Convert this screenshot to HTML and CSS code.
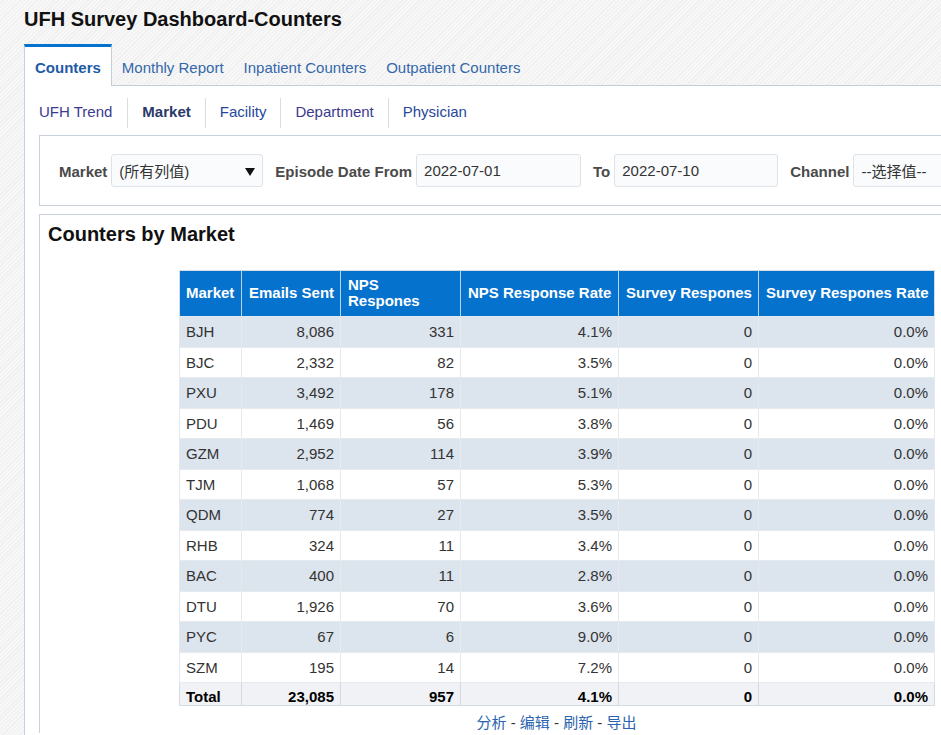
FILE: index.html
```html
<!DOCTYPE html>
<html lang="en">
<head>
<meta charset="utf-8">
<title>UFH Survey Dashboard-Counters</title>
<link rel="stylesheet" href="styles.css">
</head>
<body>
<div class="page">
  <h1 class="title">UFH Survey Dashboard-Counters</h1>
  <nav class="tabs">
    <a class="tab active">Counters</a>
    <a class="tab">Monthly Report</a>
    <a class="tab">Inpatient Counters</a>
    <a class="tab">Outpatient Counters</a>
  </nav>
  <div class="panel">
    <nav class="subtabs">
      <a class="subtab visited first">UFH Trend</a>
      <a class="subtab current">Market</a>
      <a class="subtab">Facility</a>
      <a class="subtab visited">Department</a>
      <a class="subtab">Physician</a>
    </nav>
    <div class="filters">
      <span class="flabel first">Market</span>
      <div class="field select"><span>(所有列值)</span><span class="caret"></span></div>
      <span class="flabel">Episode Date From</span>
      <div class="field date date-from">2022-07-01</div>
      <span class="flabel">To</span>
      <div class="field date date-to">2022-07-10</div>
      <span class="flabel">Channel</span>
      <div class="field select"><span>--选择值--</span><span class="caret"></span></div>
    </div>
    <section class="section">
      <h2 class="section-title">Counters by Market</h2>
      <div class="report">
        <table class="grid">
          <colgroup>
            <col class="c1"><col class="c2"><col class="c3"><col class="c4"><col class="c5"><col class="c6">
          </colgroup>
          <thead>
            <tr>
              <th>Market</th>
              <th>Emails Sent</th>
              <th>NPS<br>Respones</th>
              <th>NPS Response Rate</th>
              <th>Survey Respones</th>
              <th>Survey Respones Rate</th>
            </tr>
          </thead>
          <tbody>
            <tr class="odd"><td>BJH</td><td>8,086</td><td>331</td><td>4.1%</td><td>0</td><td>0.0%</td></tr>
            <tr><td>BJC</td><td>2,332</td><td>82</td><td>3.5%</td><td>0</td><td>0.0%</td></tr>
            <tr class="odd"><td>PXU</td><td>3,492</td><td>178</td><td>5.1%</td><td>0</td><td>0.0%</td></tr>
            <tr><td>PDU</td><td>1,469</td><td>56</td><td>3.8%</td><td>0</td><td>0.0%</td></tr>
            <tr class="odd"><td>GZM</td><td>2,952</td><td>114</td><td>3.9%</td><td>0</td><td>0.0%</td></tr>
            <tr><td>TJM</td><td>1,068</td><td>57</td><td>5.3%</td><td>0</td><td>0.0%</td></tr>
            <tr class="odd"><td>QDM</td><td>774</td><td>27</td><td>3.5%</td><td>0</td><td>0.0%</td></tr>
            <tr><td>RHB</td><td>324</td><td>11</td><td>3.4%</td><td>0</td><td>0.0%</td></tr>
            <tr class="odd"><td>BAC</td><td>400</td><td>11</td><td>2.8%</td><td>0</td><td>0.0%</td></tr>
            <tr><td>DTU</td><td>1,926</td><td>70</td><td>3.6%</td><td>0</td><td>0.0%</td></tr>
            <tr class="odd"><td>PYC</td><td>67</td><td>6</td><td>9.0%</td><td>0</td><td>0.0%</td></tr>
            <tr><td>SZM</td><td>195</td><td>14</td><td>7.2%</td><td>0</td><td>0.0%</td></tr>
            <tr class="total"><td>Total</td><td>23,085</td><td>957</td><td>4.1%</td><td>0</td><td>0.0%</td></tr>
          </tbody>
        </table>
        <div class="links"><a>分析</a> - <a>编辑</a> - <a>刷新</a> - <a>导出</a></div>
      </div>
    </section>
  </div>
</div>
</body>
</html>
```

FILE: styles.css
```css
* { box-sizing: border-box; }

html, body {
  margin: 0;
  padding: 0;
  height: 100%;
  overflow: hidden;
}

body {
  font-family: "Liberation Sans", Arial, "Noto Sans CJK SC", sans-serif;
  font-size: 15px;
  color: #333;
  background-color: #f4f4f4;
  background-image: repeating-linear-gradient(135deg, #f7f7f7 0 2px, #efefef 2px 3px);
}

.page {
  width: 1200px;
  padding-left: 24px;
  min-height: 100%;
  display: flex;
  flex-direction: column;
}

.title {
  margin: 0;
  height: 44px;
  padding-top: 7px;
  font-size: 20px;
  line-height: 24px;
  font-weight: bold;
  color: #111;
}

/* main tabs */
.tabs {
  display: flex;
  height: 42px;
  border-bottom: 1px solid #c4ced7;
}

.tab {
  display: flex;
  align-items: center;
  padding: 3px 10px 0;
  height: 41px;
  border-top: 3px solid transparent;
  color: #3468ab;
  cursor: pointer;
}

.tab.active {
  height: 42px;
  margin-bottom: -1px;
  padding-top: 2px;
  border-top-color: #0572ce;
  border-left: 1px solid #c4d0df;
  border-right: 1px solid #c4ced7;
  background: #fff;
  color: #1d5ba6;
  font-weight: bold;
}

/* content panel */
.panel {
  flex: 1;
  background: #fff;
  border-left: 1px solid #c4d0df;
  padding-left: 14px;
}

.subtabs {
  display: flex;
  padding-top: 12px;
  height: 42px;
}

.subtab {
  height: 30px;
  line-height: 27px;
  padding: 0 14px;
  border-left: 1px solid #d6dde4;
  color: #27479a;
  cursor: pointer;
}

.subtab.first {
  border-left: none;
  padding-left: 0;
  padding-right: 15px;
}

.subtab.visited { color: #3b3a8e; }

.subtab.current {
  font-weight: bold;
  color: #2a3a68;
}

/* filters */
.filters {
  margin-top: 7px;
  height: 71px;
  border: 1px solid #c9d2dc;
  border-right: none;
  display: flex;
  align-items: center;
  padding-left: 19px;
}

.flabel {
  font-weight: bold;
  color: #4a4a4a;
  margin: 2px 4px 0 12px;
}

.flabel.first { margin-left: 0; }

.field {
  height: 33px;
  border: 1px solid #dfe3e8;
  border-radius: 3px;
  background: #f9fbfd;
  color: #333;
  display: flex;
  align-items: center;
  padding: 0 7px;
  flex: none;
}

.select {
  width: 152px;
  justify-content: space-between;
}

.caret {
  width: 0;
  height: 0;
  border-top: 8px solid #111;
  border-left: 5.5px solid transparent;
  border-right: 5.5px solid transparent;
  margin-top: 2px;
}

.date-from { width: 165px; }
.date-to { width: 164px; }

/* report section */
.section {
  margin-top: 8px;
  border: 1px solid #c9d2dc;
  border-right: none;
  border-bottom: none;
  flex: 1;
  padding-left: 8px;
}

.section-title {
  margin: 0;
  padding-top: 7px;
  font-size: 20px;
  line-height: 24px;
  font-weight: bold;
  color: #111;
}

.report {
  margin-top: 24px;
  margin-left: 131px;
  width: 755px;
}

.grid {
  border-collapse: collapse;
  table-layout: fixed;
  width: 755px;
  border: 1px solid #d6dde5;
}

.c1 { width: 62px; }
.c2 { width: 99px; }
.c3 { width: 120px; }
.c4 { width: 158px; }
.c5 { width: 140px; }
.c6 { width: 176px; }

.grid th {
  background: #0572ce;
  color: #fff;
  font-weight: bold;
  text-align: left;
  padding: 6px 6px 7px 7px;
  line-height: 16px;
  height: 46px;
  border-left: 1px solid #b9d3ec;
  white-space: nowrap;
}

.grid th:first-child { border-left: none; padding-left: 6px; }

.grid td {
  height: 30.5px;
  padding: 0 6px;
  text-align: right;
  border: 1px solid #e6eaef;
  color: #333;
  background: #fff;
}

.grid td:first-child {
  text-align: left;
  padding-left: 6px;
}

.grid tr.odd td { background: #dce4ed; }

.grid tr.total td {
  height: 23px;
  padding-top: 5px;
  line-height: 17px;
  font-weight: bold;
  color: #000;
  background: #f0f2f5;
  border-color: #d3dae2;
}

.links {
  margin-top: 7px;
  text-align: center;
  line-height: 20px;
  color: #333;
}

.links a {
  color: #2a64b0;
  cursor: pointer;
}
```
